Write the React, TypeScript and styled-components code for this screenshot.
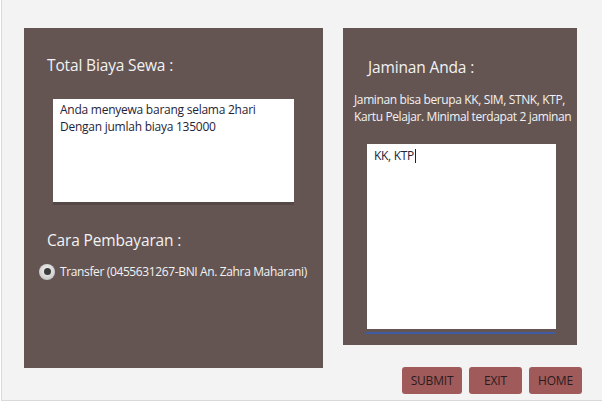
import React from "react";
import styled, { createGlobalStyle } from "styled-components";

const Global = createGlobalStyle`
  html, body { margin: 0; padding: 0; background: #ffffff; }
  body { width: 602px; height: 403px; overflow: hidden; font-family: "Open Sans", "Noto Sans", sans-serif; }
`;

const Frame = styled.div`
  box-sizing: border-box;
  margin-left: 1px;
  width: 601px;
  height: 401px;
  background: #f3f3f3;
  border-left: 1px solid #d9d9d9;
  border-bottom: 1px solid #d9d9d9;
  padding: 28px 20px 0 22px;
  display: flex;
  gap: 20px;
  align-items: flex-start;
`;

const Panel = styled.section<{ $w: number; $h: number }>`
  box-sizing: border-box;
  width: ${(p) => p.$w}px;
  height: ${(p) => p.$h}px;
  background: #645553;
  color: #f2f2f2;
  display: flex;
  flex-direction: column;
`;

const Heading = styled.h2<{ $left: number; $top: number }>`
  margin: ${(p) => p.$top}px 0 0 ${(p) => p.$left}px;
  font-size: 15.5px;
  font-weight: 400;
  line-height: 20px;
  letter-spacing: -0.15px;
`;

const TextBox = styled.div`
  box-sizing: border-box;
  margin: 24px 0 0 29px;
  width: 241px;
  height: 103px;
  background: #ffffff;
  box-shadow: 0 3px 0 #564846;
  padding: 2px 7px;
  color: #1f2438;
  font-size: 12px;
  line-height: 17px;
  letter-spacing: -0.25px;
`;

const RadioRow = styled.label`
  display: flex;
  align-items: center;
  gap: 5px;
  margin: 13px 0 0 15px;
  font-size: 12px;
  letter-spacing: -0.37px;
  color: #f2f2f2;
`;

const RadioDot = styled.span`
  box-sizing: border-box;
  width: 16px;
  height: 16px;
  border-radius: 50%;
  background: radial-gradient(circle at 50% 40%, #f4f4f4 0%, #d2d2d2 60%, #a9a9a9 100%);
  display: flex;
  align-items: center;
  justify-content: center;
  &::after {
    content: "";
    width: 7px;
    height: 7px;
    border-radius: 50%;
    background: #3b3b3b;
  }
`;

const RightCol = styled.div`
  flex: 1;
  display: flex;
  flex-direction: column;
`;

const Note = styled.p`
  margin: 14px 0 0 11px;
  font-size: 12px;
  line-height: 17px;
  letter-spacing: -0.38px;
  white-space: nowrap;
`;

const AreaWrap = styled.div`
  margin: 19px 0 0 23px;
  width: 190px;
  border-bottom: 2px solid #3f5ba3;
  padding-bottom: 3px;
`;

const Area = styled.div`
  box-sizing: border-box;
  margin-left: 1px;
  width: 189px;
  height: 185px;
  background: #ffffff;
  padding: 3px 7px;
  color: #1f2438;
  font-size: 12px;
  line-height: 17px;
  letter-spacing: -0.3px;
`;

const Caret = styled.span`
  display: inline-block;
  width: 1px;
  height: 14px;
  background: #222;
  vertical-align: -3px;
  margin-left: 1px;
`;

const Buttons = styled.div`
  display: flex;
  justify-content: flex-end;
  gap: 7px;
  margin-top: 22px;
`;

const Btn = styled.button<{ $w: number }>`
  box-sizing: border-box;
  width: ${(p) => p.$w}px;
  height: 27px;
  border: none;
  border-radius: 3px;
  background: #a05a5a;
  color: #2a1c1e;
  font-family: "Open Sans", "Noto Sans", sans-serif;
  font-size: 12px;
  letter-spacing: -0.2px;
  padding: 0;
`;

export default function App() {
  return (
    <>
      <Global />
      <Frame>
        <Panel $w={299} $h={340}>
          <Heading $left={23} $top={27}>Total Biaya Sewa :</Heading>
          <TextBox>
            Anda menyewa barang selama 2hari
            <br />
            Dengan jumlah biaya 135000
          </TextBox>
          <Heading $left={23} $top={28}>Cara Pembayaran :</Heading>
          <RadioRow>
            <RadioDot />
            Transfer (0455631267-BNI An. Zahra Maharani)
          </RadioRow>
        </Panel>
        <RightCol>
          <Panel $w={234} $h={317}>
            <Heading $left={25} $top={29}>Jaminan Anda :</Heading>
            <Note>
              Jaminan bisa berupa KK, SIM, STNK, KTP,
              <br />
              Kartu Pelajar. Minimal terdapat 2 jaminan
            </Note>
            <AreaWrap>
              <Area>
                KK, KTP
                <Caret />
              </Area>
            </AreaWrap>
          </Panel>
          <Buttons>
            <Btn $w={60}>SUBMIT</Btn>
            <Btn $w={53}>EXIT</Btn>
            <Btn $w={53}>HOME</Btn>
          </Buttons>
        </RightCol>
      </Frame>
    </>
  );
}
